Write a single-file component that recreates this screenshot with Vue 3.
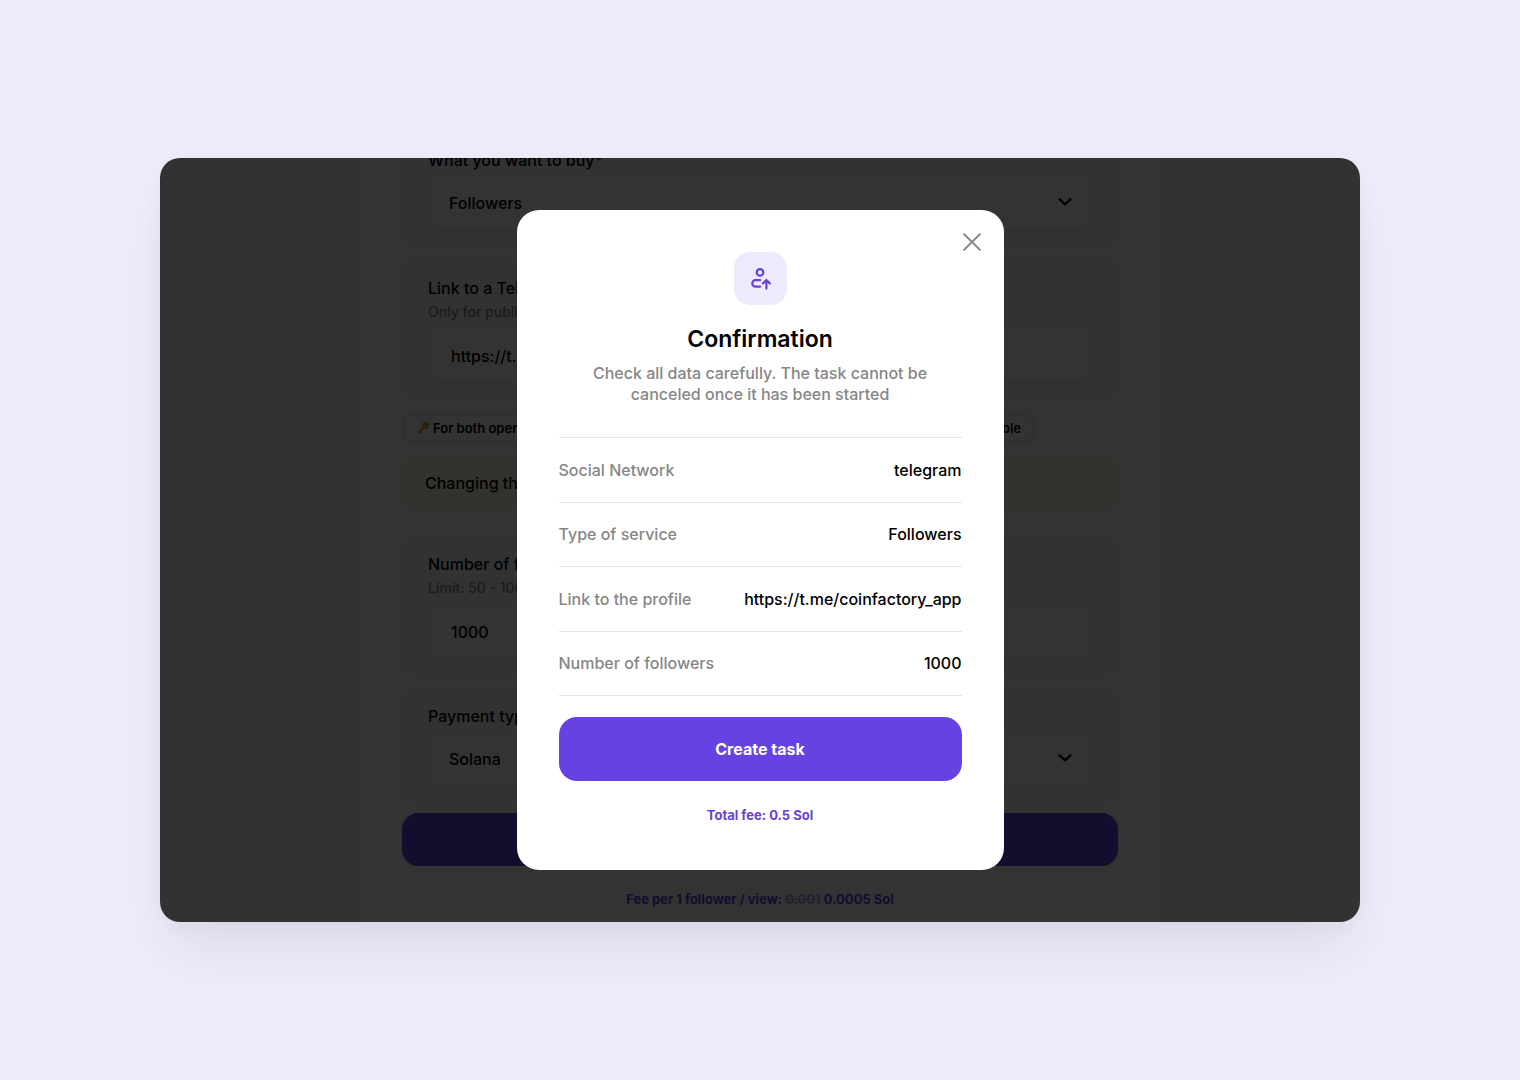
<script setup>
import { ref } from "vue";

const service = ref("Followers");
const link = ref("https://t.me/coinfactory_app");
const amount = ref("1000");
const payment = ref("Solana");

const details = [
  { name: "Social Network", value: "telegram" },
  { name: "Type of service", value: "Followers" },
  { name: "Link to the profile", value: "https://t.me/coinfactory_app" },
  { name: "Number of followers", value: "1000" },
];
</script>

<template>
  <div class="page">
    <main class="screen">
      <form class="form" @submit.prevent>
        <section class="card">
          <label class="label" for="service">What you want to buy*</label>
          <div class="select">
            <select id="service" v-model="service" class="field">
              <option>Followers</option>
            </select>
            <svg class="chevron" viewBox="0 0 14 8" aria-hidden="true">
              <path d="M1.5 1.2 L7 6.4 L12.5 1.2" />
            </svg>
          </div>
        </section>

        <section class="card">
          <label class="label" for="link">Link to a Telegram</label>
          <p class="hint">Only for public</p>
          <input id="link" v-model="link" class="field input" type="text" />
        </section>

        <div class="pill">
          <svg class="key" viewBox="0 0 14 14" aria-hidden="true">
            <path d="M8 6.5 L2 12.3" stroke="#d9962a" stroke-width="2" />
            <path d="M3.5 10.5 L5.2 12.2" stroke="#d9962a" stroke-width="1.6" />
            <circle cx="9.6" cy="4.4" r="3.6" fill="#e9ab35" />
            <circle cx="11" cy="3" r="1" fill="#6b4a16" />
          </svg>
          <span>For both open and closed</span>
          <span class="pill-end">available</span>
        </div>

        <p class="warning">Changing the link</p>

        <section class="card">
          <label class="label" for="amount">Number of followers</label>
          <p class="hint">Limit: 50 - 10000</p>
          <input id="amount" v-model="amount" class="field input" type="text" />
        </section>

        <section class="card">
          <label class="label" for="payment">Payment type</label>
          <div class="select">
            <select id="payment" v-model="payment" class="field">
              <option>Solana</option>
            </select>
            <svg class="chevron" viewBox="0 0 14 8" aria-hidden="true">
              <path d="M1.5 1.2 L7 6.4 L12.5 1.2" />
            </svg>
          </div>
        </section>

        <button class="submit" type="submit">Create task</button>
        <p class="fee">Fee per 1 follower / view: <s>0.001</s> 0.0005 Sol</p>
      </form>

      <div class="overlay">
        <div class="modal" role="dialog" aria-labelledby="title">
          <button class="close" type="button" aria-label="Close">
            <svg viewBox="0 0 18 18" aria-hidden="true">
              <path d="M1.2 1.2 L16.8 16.8 M16.8 1.2 L1.2 16.8" />
            </svg>
          </button>

          <div class="badge">
            <svg viewBox="0 0 22 24" aria-hidden="true">
              <circle cx="11" cy="5.4" r="3.3" />
              <path d="M11.2 13.2 H6.5 a3.2 3.2 0 0 0 0 6.4 H11.2" />
              <path d="M17.4 21.6 V13.4 M14 16.4 L17.4 13 L20.8 16.4" />
            </svg>
          </div>

          <h1 id="title" class="title">Confirmation</h1>
          <p class="description">
            Check all data carefully. The task cannot be canceled once it has
            been started
          </p>

          <dl class="details">
            <div v-for="item in details" :key="item.name" class="row">
              <dt>{{ item.name }}</dt>
              <dd>{{ item.value }}</dd>
            </div>
          </dl>

          <button class="create" type="button">Create task</button>
          <p class="total">Total fee: 0.5 Sol</p>
        </div>
      </div>
    </main>
  </div>
</template>

<style>
body {
  margin: 0;
  background: #eeecfa;
}
</style>

<style scoped>
.page {
  min-height: 100vh;
  box-sizing: border-box;
  padding: 0 160px;
  display: flex;
  align-items: center;
  font-family: Inter, "Liberation Sans", sans-serif;
  font-weight: 500;
  font-size: 16px;
  line-height: 20px;
  color: #000;
}

.page * {
  box-sizing: border-box;
}

p,
h1,
dl,
dd {
  margin: 0;
}

button,
input,
select {
  font: inherit;
  color: inherit;
  border: none;
}

.screen {
  position: relative;
  flex: 1;
  overflow: hidden;
  border-radius: 20px;
  background: #fbfbfb;
  box-shadow:
    0 4px 20px rgba(40, 38, 60, 0.04),
    0 36px 56px -12px rgba(40, 38, 60, 0.09);
}

/* the form is scrolled a little under the dialog */
.form {
  max-width: 804px;
  margin: -29px auto 0;
  padding: 0 43px 13px;
  display: flex;
  flex-direction: column;
  gap: 8px;
  background: #fff;
  border: 1px solid #e6e6e6;
  border-width: 0 1px;
}

.card {
  padding: 21px 25px 19px 26px;
  display: flex;
  flex-direction: column;
  border-radius: 16px;
  background: #fafafa;
}

.hint {
  margin-top: 4px;
  font-size: 14px;
  color: #868686;
}

.select {
  position: relative;
  margin-top: 6px;
}

.field {
  display: block;
  width: 100%;
  height: 54px;
  padding: 0 21px;
  border-radius: 14px;
  background: #fff;
  box-shadow: 0 1px 2px rgba(0, 0, 0, 0.08);
  appearance: none;
}

.input {
  height: 52px;
  margin-top: 8px;
  padding: 0 23px;
}

.chevron {
  position: absolute;
  top: 22px;
  right: 21px;
  width: 14px;
  height: 8px;
  fill: none;
  stroke: #000;
  stroke-width: 2.2;
  stroke-linecap: round;
  stroke-linejoin: round;
}

.pill {
  width: 633px;
  height: 30px;
  margin: 4px 0;
  padding: 0 12px;
  display: flex;
  align-items: center;
  gap: 3px;
  border: 2px solid #ececec;
  border-radius: 12px;
  font-size: 13px;
  font-weight: 600;
}

.key {
  width: 14px;
  height: 14px;
}

.pill-end {
  margin-left: auto;
}

.warning {
  height: 55px;
  margin-bottom: 15px;
  padding: 0 22px;
  line-height: 54px;
  border: 1px solid #fff4da;
  border-radius: 14px;
  background: #fff8e8;
}

.submit {
  height: 53px;
  border-radius: 16px;
  background: #6742e3;
  color: #fff;
}

.fee {
  margin-top: 15px;
  text-align: center;
  font-size: 13px;
  font-weight: 700;
  color: #6742e3;
}

.fee s {
  opacity: 0.5;
}

.overlay {
  position: absolute;
  inset: 0;
  display: flex;
  align-items: center;
  justify-content: center;
  background: rgba(0, 0, 0, 0.8);
}

.modal {
  position: relative;
  width: 487px;
  padding: 42px 42px 45px;
  display: flex;
  flex-direction: column;
  border-radius: 22px;
  background: #fff;
  text-align: center;
}

.close {
  position: absolute;
  top: 19px;
  right: 19px;
  padding: 4px;
  background: none;
}

.close svg {
  display: block;
  width: 18px;
  height: 18px;
  fill: none;
  stroke: #8c8c8c;
  stroke-width: 2;
  stroke-linecap: round;
}

.badge {
  align-self: center;
  width: 53px;
  height: 53px;
  display: flex;
  align-items: center;
  justify-content: center;
  border-radius: 16px;
  background: #eeeafd;
}

.badge svg {
  width: 22px;
  height: 24px;
  fill: none;
  stroke: #6742d3;
  stroke-width: 2.2;
  stroke-linecap: round;
  stroke-linejoin: round;
}

.title {
  margin-top: 20px;
  font-size: 23px;
  font-weight: 600;
  line-height: 28px;
}

.description {
  margin-top: 10px;
  padding: 0 24px;
  line-height: 21px;
  color: #868686;
}

.details {
  height: 259px;
  margin-top: 32px;
  display: grid;
  grid-auto-rows: 1fr;
  border-top: 1px solid #e4e4e4;
}

.row {
  display: flex;
  align-items: center;
  justify-content: space-between;
  border-bottom: 1px solid #e4e4e4;
}

.row dt {
  color: #868686;
}

.create {
  height: 64px;
  margin-top: 21px;
  border-radius: 18px;
  background: #6742e3;
  color: #fff;
  font-weight: 700;
}

.total {
  margin-top: 24px;
  font-size: 13px;
  font-weight: 700;
  color: #6742d3;
}
</style>
